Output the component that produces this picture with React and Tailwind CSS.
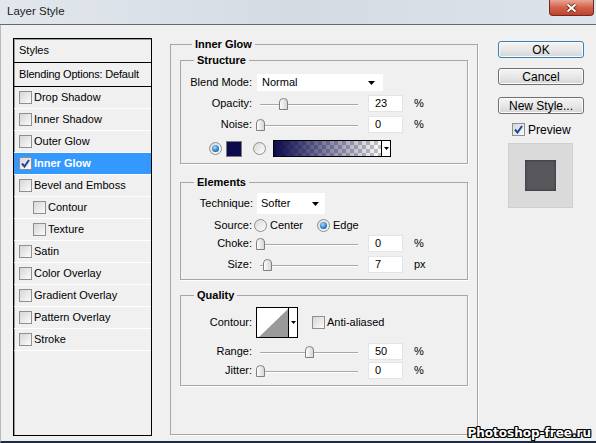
import React from 'react';

const Checkbox = ({ checked = false }) => (
  <div className="w-[13px] h-[13px] shrink-0 border border-[#8e8f8f] bg-gradient-to-br from-[#d6d6d6] to-[#fbfbfb] flex items-center justify-center">
    {checked && (
      <svg width="9" height="9" viewBox="0 0 9 9">
        <path d="M1 4.5 L3.5 7.5 L8 1" fill="none" stroke="#21449c" strokeWidth="2" />
      </svg>
    )}
  </div>
);

const Radio = ({ checked = false }) => (
  <div className="w-[13px] h-[13px] shrink-0 rounded-full border border-[#8e8f8f] bg-gradient-to-br from-[#d9d9d9] to-[#fdfdfd] flex items-center justify-center">
    {checked && (
      <div className="w-[7px] h-[7px] rounded-full bg-[radial-gradient(circle_at_40%_35%,#9fdcff,#1c6bb0_70%,#0e3f7a)]" />
    )}
  </div>
);

const Caret = () => (
  <svg width="7" height="4" viewBox="0 0 7 4">
    <path d="M0 0 H7 L3.5 4 Z" fill="#000" />
  </svg>
);

// slider with number box; pos is the thumb place in percent of the track
const SliderRow = ({ label, value, unit, pos, className = '' }) => (
  <div className={`flex items-center h-[17px] ${className}`}>
    <div className="w-[71px] text-right">{label}</div>
    <div className="relative ml-[5px] w-[106px] h-[17px]">
      <div className="absolute left-[3px] right-[5px] top-[9px] h-px bg-[#a8a8a8] shadow-[0_1px_0_#ffffff]" />
      <svg
        className="absolute top-[3px]"
        style={{ left: `${3 + (pos / 100) * 98 - 4}px` }}
        width="9"
        height="12"
        viewBox="0 0 9 12"
      >
        <defs>
          <linearGradient id="thumb" x1="0" y1="0" x2="1" y2="0">
            <stop offset="0" stopColor="#ffffff" />
            <stop offset="1" stopColor="#d4d4d4" />
          </linearGradient>
        </defs>
        <path d="M0.5 4 Q0.5 0.5 4.5 0.5 Q8.5 0.5 8.5 4 V11.5 H0.5 Z" fill="url(#thumb)" stroke="#808080" />
      </svg>
    </div>
    <div className="ml-[5px] w-[35px] h-[17px] bg-white border border-[#e4e4e4] flex items-center pl-[6px]">{value}</div>
    <div className="ml-[11px]">{unit}</div>
  </div>
);

const Group = ({ title, children, className = '' }) => (
  <fieldset className={`border border-[#a6a6a6] shadow-[1px_1px_0_#ffffff] ${className}`}>
    <legend className="ml-[13px] px-[3px] font-bold leading-[13px]">{title}</legend>
    {children}
  </fieldset>
);

const styleRows = [
  { name: 'Drop Shadow' },
  { name: 'Inner Shadow' },
  { name: 'Outer Glow' },
  { name: 'Inner Glow', active: true },
  { name: 'Bevel and Emboss' },
  { name: 'Contour', sub: true },
  { name: 'Texture', sub: true },
  { name: 'Satin' },
  { name: 'Color Overlay' },
  { name: 'Gradient Overlay' },
  { name: 'Pattern Overlay' },
  { name: 'Stroke' },
];

const Button = ({ children, primary }) => (
  <button
    className={`w-[86px] h-[17px] rounded-[3px] border text-[12px] leading-none flex items-center justify-center bg-gradient-to-b from-[#f4f4f4] via-[#e8e8e8] to-[#d6d6d6] shadow-[inset_0_0_0_1px_#fbfbfb] ${
      primary ? 'border-[#3c7fb1]' : 'border-[#707070]'
    }`}
  >
    {children}
  </button>
);

export default function App() {
  return (
    <div className="relative w-[596px] h-[443px] overflow-hidden flex flex-col bg-[#f0f0f0] text-[11px] text-black font-['Liberation_Sans',Arial,sans-serif]">
      {/* title bar */}
      <div className="h-[25px] shrink-0 flex items-start border-b border-[#646a72] bg-gradient-to-r from-[#e2e7ed] via-[#d4dbe3] to-[#dde3ea]">
        <div className="self-center pl-[7px] text-[11.5px] text-[#1b1b1b]">Layer Style</div>
        <div className="ml-auto mr-[2px] w-[45px] h-[16px] rounded-b-[4px] border border-t-0 border-[#6b2a22] bg-gradient-to-b from-[#e8a594] via-[#d2614a] to-[#c1422b] flex items-center justify-center">
          <svg width="11" height="10" viewBox="0 0 11 10">
            <path d="M1.5 1.5 L9.5 8.5 M9.5 1.5 L1.5 8.5" stroke="#5a1a10" strokeWidth="3.6" />
            <path d="M1.5 1.5 L9.5 8.5 M9.5 1.5 L1.5 8.5" stroke="#ffffff" strokeWidth="2" />
          </svg>
        </div>
      </div>

      {/* body */}
      <div className="flex-1 flex items-start border-l border-[#b4bcc4] border-b-2 border-b-[#1f2a44]">
        {/* styles list */}
        <div className="mt-[13px] ml-[12px] w-[139px] h-[398px] shrink-0 flex flex-col border border-black shadow-[inset_1px_1px_0_#9a9a9a]">
          <div className="h-[24px] pl-[5px] flex items-center border-b border-black">Styles</div>
          <div className="h-[24px] pl-[5px] flex items-center border-b border-black tracking-[-0.2px]">Blending Options: Default</div>
          {styleRows.map((row) => (
            <div
              key={row.name}
              className={`h-[22px] flex items-center border-b border-white ${row.sub ? 'pl-[19px]' : 'pl-[5px]'} ${
                row.active ? 'bg-[#3399ff] text-white font-bold' : ''
              }`}
            >
              <Checkbox checked={row.active} />
              <span className="ml-[2px]">{row.name}</span>
            </div>
          ))}
        </div>

        {/* inner glow settings */}
        <fieldset className="mt-[13px] ml-[18px] w-[308px] h-[397px] shrink-0 border border-[#a6a6a6] shadow-[1px_1px_0_#ffffff] px-[9px]">
          <legend className="ml-[12px] px-[3px] font-bold leading-[13px]">Inner Glow</legend>

          <Group title="Structure" className="mt-[3px] pb-[6px]">
            <div className="flex items-center h-[17px] mt-[7px]">
              <div className="w-[71px] text-right">Blend Mode:</div>
              <div className="ml-[5px] w-[126px] h-[17px] bg-white flex items-center pl-[5px] pr-[8px] justify-between">
                <span>Normal</span>
                <Caret />
              </div>
            </div>
            <SliderRow label="Opacity:" value="23" unit="%" pos={23} className="mt-[4px]" />
            <SliderRow label="Noise:" value="0" unit="%" pos={0} className="mt-[4px]" />
            <div className="flex items-center h-[17px] mt-[7px]">
              <div className="ml-[28px]">
                <Radio checked />
              </div>
              <div className="ml-[4px] w-[16px] h-[16px] border border-[#7a7a7a] bg-[#0b0a4c]" />
              <div className="ml-[11px]">
                <Radio />
              </div>
              <div className="ml-[7px] w-[118px] h-[17px] flex border border-black">
                <div className="flex-1 [background:linear-gradient(to_right,#0b0a4c,rgba(11,10,76,0)),repeating-conic-gradient(#c4c4c4_0_25%,#ffffff_0_50%)_0_0/8px_8px]" />
                <div className="w-[9px] border-l border-black bg-white flex items-center justify-center">
                  <svg width="5" height="3" viewBox="0 0 5 3">
                    <path d="M0 0 H5 L2.5 3 Z" fill="#000" />
                  </svg>
                </div>
              </div>
            </div>
          </Group>

          <Group title="Elements" className="mt-[12px] pb-[6px]">
            <div className="flex items-center h-[21px] mt-[4px]">
              <div className="w-[72px] text-right">Technique:</div>
              <div className="ml-[4px] w-[68px] h-[21px] bg-white flex items-center pl-[4px] pr-[6px] justify-between">
                <span>Softer</span>
                <Caret />
              </div>
            </div>
            <div className="flex items-center h-[16px] mt-[3px]">
              <div className="w-[71px] text-right">Source:</div>
              <div className="ml-[2px]">
                <Radio />
              </div>
              <span className="ml-[3px]">Center</span>
              <div className="ml-[14px]">
                <Radio checked />
              </div>
              <span className="ml-[3px]">Edge</span>
            </div>
            <SliderRow label="Choke:" value="0" unit="%" pos={0} className="mt-[2px]" />
            <SliderRow label="Size:" value="7" unit="px" pos={7} className="mt-[4px]" />
          </Group>

          <Group title="Quality" className="mt-[9px] pb-[6px]">
            <div className="flex items-center h-[31px] mt-[5px]">
              <div className="w-[71px] text-right">Contour:</div>
              <div className="ml-[4px] w-[42px] h-[31px] flex border border-black bg-white">
                <svg width="31" height="29" viewBox="0 0 31 29">
                  <path d="M2 29 L31 1 V29 Z" fill="#9a9a9a" />
                </svg>
                <div className="flex-1 border-l border-black flex items-center justify-center">
                  <svg width="5" height="3" viewBox="0 0 5 3">
                    <path d="M0 0 H5 L2.5 3 Z" fill="#000" />
                  </svg>
                </div>
              </div>
              <div className="ml-[14px]">
                <Checkbox />
              </div>
              <span className="ml-[2px]">Anti-aliased</span>
            </div>
            <SliderRow label="Range:" value="50" unit="%" pos={50} className="mt-[5px]" />
            <SliderRow label="Jitter:" value="0" unit="%" pos={0} className="mt-[2px]" />
          </Group>
        </fieldset>

        {/* buttons and preview */}
        <div className="mt-[16px] ml-[20px] w-[86px] shrink-0 flex flex-col">
          <Button primary>OK</Button>
          <div className="mt-[10px]">
            <Button>Cancel</Button>
          </div>
          <div className="mt-[12px]">
            <Button>New Style...</Button>
          </div>
          <div className="mt-[9px] ml-[14px] h-[13px] flex items-center text-[12px]">
            <Checkbox checked />
            <span className="ml-[3px]">Preview</span>
          </div>
          <div className="mt-[7px] ml-[10px] w-[65px] h-[65px] border border-[#cfcfcf] bg-[#dadada] flex items-center justify-center">
            <div className="w-[31px] h-[31px] bg-[#57575c] shadow-[inset_0_0_3px_#2c2c3c]" />
          </div>
        </div>
      </div>

      {/* watermark */}
      <div className="absolute right-[5px] bottom-[3px] font-['DejaVu_Sans',Verdana,sans-serif] font-bold text-[12px] leading-[14px] text-white [text-shadow:1px_0_0_#000,-1px_0_0_#000,0_1px_0_#000,0_-1px_0_#000,1px_1px_0_#000,-1px_-1px_0_#000,1px_-1px_0_#000,-1px_1px_0_#000]">
        Photoshop-free.ru
      </div>
    </div>
  );
}
